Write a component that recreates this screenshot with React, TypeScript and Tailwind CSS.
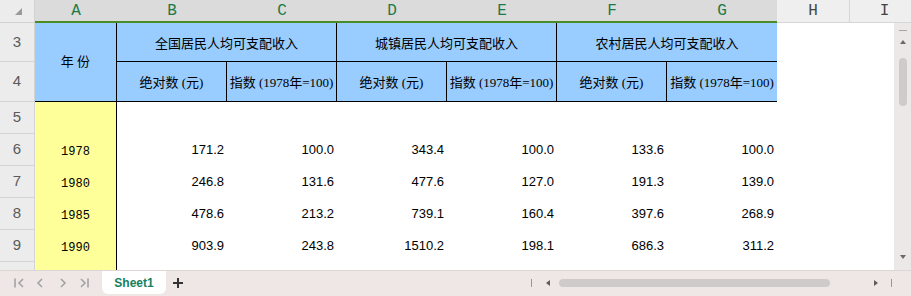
import React from 'react'

const headerCols = [
  { name: 'A', w: 'w-[82px]', sel: true },
  { name: 'B', w: 'w-[110px]', sel: true },
  { name: 'C', w: 'w-[110px]', sel: true },
  { name: 'D', w: 'w-[110px]', sel: true },
  { name: 'E', w: 'w-[110px]', sel: true },
  { name: 'F', w: 'w-[110px]', sel: true },
  { name: 'G', w: 'w-[110px]', sel: true },
  { name: 'H', w: 'w-[73px]', sel: false },
  { name: 'I', w: 'w-[70px]', sel: false },
]

const rows = [
  { n: '5', year: '', vals: ['', '', '', '', '', ''] },
  { n: '6', year: '1978', vals: ['171.2', '100.0', '343.4', '100.0', '133.6', '100.0'] },
  { n: '7', year: '1980', vals: ['246.8', '131.6', '477.6', '127.0', '191.3', '139.0'] },
  { n: '8', year: '1985', vals: ['478.6', '213.2', '739.1', '160.4', '397.6', '268.9'] },
  { n: '9', year: '1990', vals: ['903.9', '243.8', '1510.2', '198.1', '686.3', '311.2'] },
  { n: '10', year: '', vals: ['', '', '', '', '', ''] },
]

const groups = ['全国居民人均可支配收入', '城镇居民人均可支配收入', '农村居民人均可支配收入']

const rowHead =
  "flex items-center justify-center bg-[#ececec] border-r border-b border-[#d4d4d4] text-[15px] text-[#5a5a5a] font-['Liberation_Sans',sans-serif]"
const blueCell =
  "flex items-center justify-center bg-[#99ccff] border-b border-black text-[13px] text-black font-['Liberation_Serif','Noto_Sans_CJK_SC',serif] whitespace-nowrap"

const App = () => {
  return (
    <div className="w-[911px] h-[296px] flex flex-col bg-white overflow-hidden select-none">
      {/* column letters */}
      <div className="flex h-[23px] shrink-0">
        <div className="w-[35px] shrink-0 bg-[#ececec] border-r border-b border-[#d2d2d2] flex items-end justify-end pr-[12px] pb-[7px]">
          <svg width="7" height="7" viewBox="0 0 7 7">
            <polygon points="7,0 7,7 0,7" fill="#9a9a9a" />
          </svg>
        </div>
        {headerCols.map((c) => (
          <div
            key={c.name}
            className={
              c.sel
                ? `${c.w} shrink-0 bg-[#dbdbdb] border-b-2 border-[#4a8c25] flex items-center justify-center text-[16px] text-[#1b7a45] font-['Liberation_Mono',monospace]`
                : `${c.w} shrink-0 bg-[#efefef] border-b border-r border-[#d6d6d6] flex items-center justify-center text-[16px] text-[#444] font-['Liberation_Mono',monospace]`
            }
          >
            {c.name}
          </div>
        ))}
      </div>

      {/* sheet body */}
      <div className="flex h-[247px] shrink-0">
        <div className="w-[894px] overflow-hidden">
          <div className="grid grid-cols-[35px_82px_repeat(6,110px)_73px_70px] grid-rows-[39px_40px_repeat(6,32px)] w-[920px]">
            {/* row 3 */}
            <div className={rowHead}>3</div>
            <div className={`${blueCell} row-span-2 border-r`}>年&nbsp;份</div>
            {groups.map((g, i) => (
              <div key={g} className={`${blueCell} col-span-2 pt-[3px] ${i < 2 ? 'border-r' : ''}`}>
                {g}
              </div>
            ))}
            <div />
            <div />

            {/* row 4 */}
            <div className={rowHead}>4</div>
            {[0, 1, 2, 3, 4, 5].map((i) =>
              i % 2 === 0 ? (
                <div key={i} className={`${blueCell} border-r pt-[2px]`}>
                  绝对数 (元)
                </div>
              ) : (
                <div key={i} className={`${blueCell} pt-[2px] ${i < 5 ? 'border-r' : ''}`}>
                  指数 (1978年=100)
                </div>
              )
            )}
            <div />
            <div />

            {/* data rows */}
            {rows.map((r) => (
              <React.Fragment key={r.n}>
                <div className={rowHead}>{r.n}</div>
                <div className="bg-[#ffff99] border-r border-black flex items-center justify-center pt-[3px] text-[12px] text-black font-['Liberation_Mono',monospace]">
                  {r.year}
                </div>
                {r.vals.map((v, i) => (
                  <div
                    key={i}
                    className="flex items-center justify-end pr-[3px] text-[13px] text-black font-['Liberation_Sans',Arial,sans-serif]"
                  >
                    {v}
                  </div>
                ))}
                <div />
                <div />
              </React.Fragment>
            ))}
          </div>
        </div>

        {/* vertical scrollbar */}
        <div className="w-[17px] shrink-0 bg-[#ece8e7] flex flex-col items-center">
          <div className="mt-[7px] w-[8px] h-[1px] bg-[#a8a4a4]" />
          <div className="mt-[9px] w-0 h-0 border-x-[3px] border-x-transparent border-b-[4px] border-b-[#6e6a6a]" />
          <div className="mt-[14px] w-[8px] h-[48px] rounded-full bg-[#cfcbca]" />
          <div className="flex-1" />
          <div className="mb-[11px] w-0 h-0 border-x-[3px] border-x-transparent border-t-[4px] border-t-[#6e6a6a]" />
        </div>
      </div>

      {/* bottom bar */}
      <div className="flex h-[26px] shrink-0 bg-[#eee7e6] border-t border-[#dcd6d5]">
        <div className="w-[102px] shrink-0 flex items-center pb-[1px]">
          <svg className="ml-[13px]" width="12" height="10" viewBox="0 0 12 10" fill="none" stroke="#a3a3a3" strokeWidth="1.6">
            <line x1="2" y1="0.5" x2="2" y2="9.5" />
            <polyline points="10,1 6,5 10,9" />
          </svg>
          <svg className="ml-[10px]" width="12" height="10" viewBox="0 0 12 10" fill="none" stroke="#a3a3a3" strokeWidth="1.6">
            <polyline points="7,1 3,5 7,9" />
          </svg>
          <svg className="ml-[10px]" width="12" height="10" viewBox="0 0 12 10" fill="none" stroke="#a3a3a3" strokeWidth="1.6">
            <polyline points="4,1 8,5 4,9" />
          </svg>
          <svg className="ml-[9px]" width="12" height="10" viewBox="0 0 12 10" fill="none" stroke="#a3a3a3" strokeWidth="1.6">
            <polyline points="3,1 7,5 3,9" />
            <line x1="10" y1="0.5" x2="10" y2="9.5" />
          </svg>
        </div>
        <div className="w-[64px] h-[23px] shrink-0 bg-white rounded-b-[6px] flex items-center justify-center text-[12px] font-bold text-[#15805f] font-['Liberation_Sans',Arial,sans-serif]">
          Sheet1
        </div>
        <div className="ml-[6px] flex items-center pb-[1px]">
          <svg width="12" height="12" viewBox="0 0 12 12" stroke="#333" strokeWidth="2">
            <line x1="6" y1="1" x2="6" y2="11" />
            <line x1="1" y1="6" x2="11" y2="6" />
          </svg>
        </div>
        <div className="ml-auto mr-[19px] flex items-center pb-[1px]">
          <div className="w-[1px] h-[8px] bg-[#9a9696]" />
          <div className="ml-[14px] w-0 h-0 border-y-[3px] border-y-transparent border-r-[4px] border-r-[#5f5b5b]" />
          <div className="ml-[9px] w-[271px] h-[8px] rounded-full bg-[#cfcbca]" />
          <div className="ml-[44px] w-0 h-0 border-y-[3px] border-y-transparent border-l-[4px] border-l-[#5f5b5b]" />
          <div className="ml-[13px] w-[1px] h-[8px] bg-[#9a9696]" />
        </div>
      </div>
    </div>
  )
}

export default App
